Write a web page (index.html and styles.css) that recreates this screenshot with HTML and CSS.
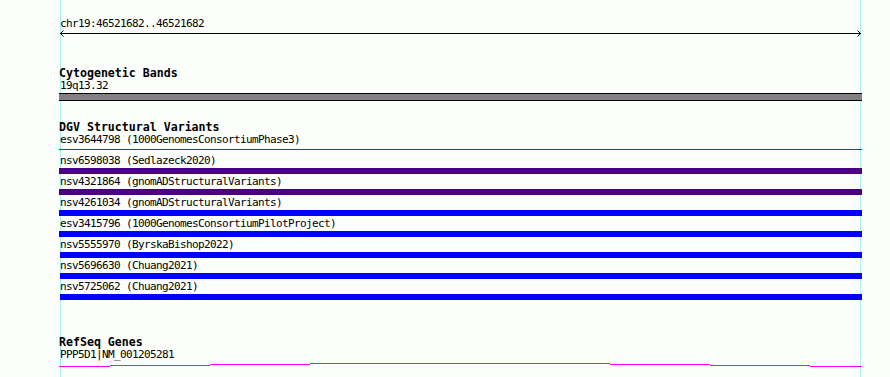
FILE: index.html
```html
<!DOCTYPE html>
<html>
<head>
<meta charset="utf-8">
<link rel="stylesheet" href="styles.css">
</head>
<body>
<main class="tracks">
  <section class="ruler">
    <div class="label">chr19:46521682..46521682</div>
    <svg class="arrow" width="803" height="7" viewBox="0 0 803 7">
      <line x1="1" y1="3.5" x2="802" y2="3.5" stroke="#000" stroke-width="1"/>
      <polyline points="4.5,0.5 1.5,3.5 4.5,6.5" fill="none" stroke="#000" stroke-width="1"/>
      <polyline points="798.5,0.5 801.5,3.5 798.5,6.5" fill="none" stroke="#000" stroke-width="1"/>
    </svg>
  </section>

  <section class="track cyto">
    <h2 class="title">Cytogenetic Bands</h2>
    <div class="label">19q13.32</div>
    <div class="band"></div>
  </section>

  <section class="track dgv">
    <h2 class="title">DGV Structural Variants</h2>
    <div class="feature thin">
      <div class="label">esv3644798 (1000GenomesConsortiumPhase3)</div>
      <div class="bar red"></div>
    </div>
    <div class="feature">
      <div class="label">nsv6598038 (Sedlazeck2020)</div>
      <div class="bar indigo"></div>
    </div>
    <div class="feature">
      <div class="label">nsv4321864 (gnomADStructuralVariants)</div>
      <div class="bar indigo"></div>
    </div>
    <div class="feature">
      <div class="label">nsv4261034 (gnomADStructuralVariants)</div>
      <div class="bar blue"></div>
    </div>
    <div class="feature">
      <div class="label">esv3415796 (1000GenomesConsortiumPilotProject)</div>
      <div class="bar blue"></div>
    </div>
    <div class="feature">
      <div class="label">nsv5555970 (ByrskaBishop2022)</div>
      <div class="bar blue inset"></div>
    </div>
    <div class="feature">
      <div class="label">nsv5696630 (Chuang2021)</div>
      <div class="bar blue inset"></div>
    </div>
    <div class="feature">
      <div class="label">nsv5725062 (Chuang2021)</div>
      <div class="bar blue inset"></div>
    </div>
  </section>

  <section class="track refseq">
    <h2 class="title">RefSeq Genes</h2>
    <div class="label">PPP5D1|NM_001205281</div>
    <div class="gene">
      <span class="seg s3" style="width:51px"></span>
      <span class="seg s2" style="width:100px"></span>
      <span class="seg s1" style="width:100px"></span>
      <span class="seg s0" style="width:300px"></span>
      <span class="seg s1" style="width:100px"></span>
      <span class="seg s2" style="width:100px"></span>
      <span class="seg s3" style="width:52px"></span>
    </div>
  </section>
</main>
</body>
</html>
```

FILE: styles.css
```css
html, body {
  margin: 0;
  padding: 0;
}

body {
  width: 890px;
  height: 377px;
  overflow: hidden;
  background-color: #fbfefb;
  background-image:
    linear-gradient(to right, transparent 60px, #aaeeee 60px, #aaeeee 61px, transparent 61px),
    linear-gradient(to right, transparent 860px, #aaeeee 860px, #aaeeee 861px, transparent 861px);
  font-family: "DejaVu Sans Mono", "Liberation Mono", monospace;
  color: #000;
}

.tracks {
  margin-left: 59px;
  width: 803px;
  padding-top: 18px;
}

.label {
  font-size: 11px;
  letter-spacing: -0.62px;
  line-height: 12px;
  height: 12px;
  padding-left: 1px;
  white-space: nowrap;
}

.title {
  margin: 0 0 1px;
  font-size: 11.6px;
  font-weight: bold;
  line-height: 12px;
  height: 12px;
  white-space: nowrap;
}

.ruler .arrow {
  display: block;
}

.cyto {
  margin-top: 30px;
}

.band {
  margin-top: 1px;
  height: 6px;
  background: #838083;
  border-top: 1px solid #000;
  border-bottom: 1px solid #000;
}

.dgv {
  margin-top: 20px;
}

.feature .bar {
  margin-top: 1px;
  height: 6px;
  margin-bottom: 2px;
}

.feature.thin .bar {
  margin-top: 3px;
  height: 1px;
  margin-bottom: 5px;
}

.bar.red { background: #e00000; }
.bar.indigo { background: #4b0082; }
.bar.blue { background: #0000ff; }
.bar.inset { margin-left: 1px; }

.refseq {
  margin-top: 36px;
}

.gene {
  display: flex;
  align-items: flex-start;
  height: 6px;
  margin-top: 1px;
}

.seg {
  display: block;
  height: 1px;
  background: #ff00ff;
}

.seg.s0 { margin-top: 1px; }
.seg.s1 { margin-top: 2px; }
.seg.s2 { margin-top: 3px; }
.seg.s3 { margin-top: 4px; }
```
